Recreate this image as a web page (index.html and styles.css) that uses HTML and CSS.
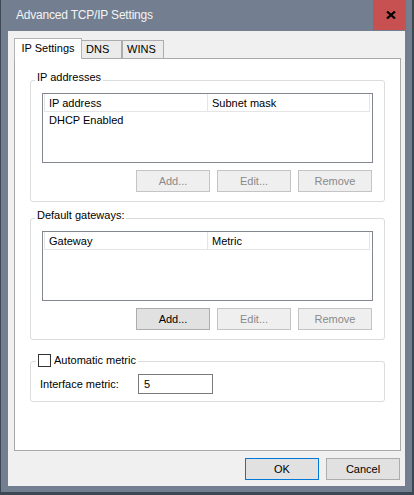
FILE: index.html
```html
<!DOCTYPE html>
<html>
<head>
<meta charset="utf-8">
<title>Advanced TCP/IP Settings</title>
<link rel="stylesheet" href="styles.css">
</head>
<body>
<div class="window">
  <div class="titlebar">
    <div class="title">Advanced TCP/IP Settings</div>
    <div class="close">
      <svg width="10" height="8" viewBox="0 0 10 8"><path d="M1 0.5 L9 7.5 M9 0.5 L1 7.5" stroke="#000" stroke-width="2.2" fill="none"/></svg>
    </div>
  </div>
  <div class="client">
    <div class="tabs">
      <div class="tab tab-active">IP Settings</div>
      <div class="tab tab-dns">DNS</div>
      <div class="tab tab-wins">WINS</div>
    </div>
    <div class="panel">
      <div class="group">
        <div class="group-title">IP addresses</div>
        <div class="list">
          <div class="list-head">
            <div class="col col1">IP address</div>
            <div class="col col2">Subnet mask</div>
          </div>
          <div class="list-row">DHCP Enabled</div>
        </div>
        <div class="btn-row">
          <div class="btn disabled">Add...</div>
          <div class="btn disabled">Edit...</div>
          <div class="btn disabled">Remove</div>
        </div>
      </div>
      <div class="group group-gw">
        <div class="group-title">Default gateways:</div>
        <div class="list">
          <div class="list-head">
            <div class="col col1">Gateway</div>
            <div class="col col2">Metric</div>
          </div>
        </div>
        <div class="btn-row">
          <div class="btn">Add...</div>
          <div class="btn disabled">Edit...</div>
          <div class="btn disabled">Remove</div>
        </div>
      </div>
      <div class="group group-metric">
        <div class="group-title check-title">
          <span class="checkbox"></span>
          <span>Automatic metric</span>
        </div>
        <div class="metric-row">
          <span class="metric-label">Interface metric:</span>
          <span class="textbox">5</span>
        </div>
      </div>
    </div>
    <div class="footer">
      <div class="btn btn-default">OK</div>
      <div class="btn">Cancel</div>
    </div>
  </div>
</div>
</body>
</html>
```
FILE: styles.css
```css
* { box-sizing: border-box; }
html, body { margin: 0; padding: 0; }
body {
  width: 414px;
  height: 495px;
  overflow: hidden;
  background: #fff;
  font-family: "Liberation Sans", Arial, sans-serif;
  font-size: 11px;
  color: #000;
}
.window {
  width: 414px;
  height: 495px;
  background: #737f90;
  border-left: 1px solid #3d4653;
  border-right: 2px solid #3d4653;
  border-bottom: 3px solid #3d4653;
  display: flex;
  flex-direction: column;
}
.titlebar {
  height: 31px;
  display: flex;
  align-items: flex-start;
  flex: none;
}
.title {
  padding: 8px 0 0 15px;
  font-size: 12px;
  line-height: 14px;
  letter-spacing: -0.2px;
  color: #f4f4f4;
}
.close {
  margin-left: auto;
  margin-right: 6px;
  width: 33px;
  height: 30px;
  background: #c75050;
  display: flex;
  align-items: center;
  justify-content: center;
  padding-bottom: 1px;
  padding-left: 2px;
}
.close svg { display: block; }
.client {
  flex: 1;
  margin: 0 7px 6px 7px;
  background: #f0f0f0;
  padding: 7px 4px 0 6px;
  display: flex;
  flex-direction: column;
}
.tabs {
  display: flex;
  align-items: flex-end;
  height: 21px;
  margin-bottom: -1px;
  flex: none;
}
.tab {
  height: 18px;
  margin-bottom: 1px;
  border: 1px solid #acacac;
  border-bottom: none;
  background: #ebebeb;
  line-height: 13px;
  padding-top: 2px;
  padding-left: 4px;
}
.tab-active {
  position: relative;
  z-index: 1;
  width: 68px;
  height: 21px;
  margin-bottom: 0;
  background: #fff;
  border-color: #b4b4b4;
  padding: 3px 0 0 0;
  text-align: center;
}
.tab-dns { width: 41px; margin-left: -1px; border-left-color: #d0d0d0; }
.tab-wins { width: 42px; margin-left: 0; }
.panel {
  width: 387px;
  height: 393px;
  flex: none;
  background: #fff;
  border: 1px solid #a9a9a9;
  padding: 21px 15px 0 15px;
  display: flex;
  flex-direction: column;
}
.group {
  border: 1px solid #dcdcdc;
  border-radius: 3px;
  padding: 0 11px 9px 11px;
  display: flex;
  flex-direction: column;
}
.group-gw { margin-top: 16px; }
.group-metric { margin-top: 21px; padding-bottom: 7px; }
.group-title {
  align-self: flex-start;
  margin: -10px 0 0 -7px;
  padding: 0 2px;
  background: #fff;
  line-height: 13px;
}
.check-title {
  margin: -8px 0 0 -6px;
  height: 13px;
  display: flex;
  align-items: center;
  gap: 3px;
}
.checkbox {
  width: 13px;
  height: 13px;
  border: 1px solid #333;
  background: #fff;
  flex: none;
}
.list {
  margin-top: 9px;
  height: 70px;
  border: 1px solid #828790;
  background: #fff;
  padding-left: 1px;
}
.list-head {
  display: flex;
  height: 18px;
}
.col {
  height: 18px;
  border: 1px solid #e5e5e5;
  border-top: none;
  line-height: 16px;
  padding-top: 1px;
}
.col1 { width: 164px; padding-left: 4px; }
.col2 { width: 162px; border-left: none; padding-left: 4px; }
.list-row {
  padding: 2px 0 0 5px;
  line-height: 13px;
}
.btn-row {
  margin-top: 7px;
  display: flex;
  justify-content: flex-end;
  gap: 7px;
  padding-right: 1px;
}
.btn {
  width: 74px;
  height: 22px;
  border: 1px solid #adadad;
  background: #e1e1e1;
  text-align: center;
  line-height: 20px;
  color: #000;
}
.btn.disabled {
  background: #efefef;
  border-color: #c4c4c4;
  color: #8a8a8a;
}
.btn-default { border-color: #0078d7; }
.metric-row {
  margin-top: 7px;
  margin-left: -2px;
  display: flex;
  align-items: center;
}
.metric-label {
  width: 98px;
  line-height: 13px;
}
.textbox {
  width: 75px;
  height: 20px;
  border: 1px solid #7a7a7a;
  background: #fff;
  padding-left: 5px;
  line-height: 18px;
}
.footer {
  margin-top: 7px;
  display: flex;
  justify-content: flex-end;
  gap: 7px;
  padding-right: 1px;
}
```
